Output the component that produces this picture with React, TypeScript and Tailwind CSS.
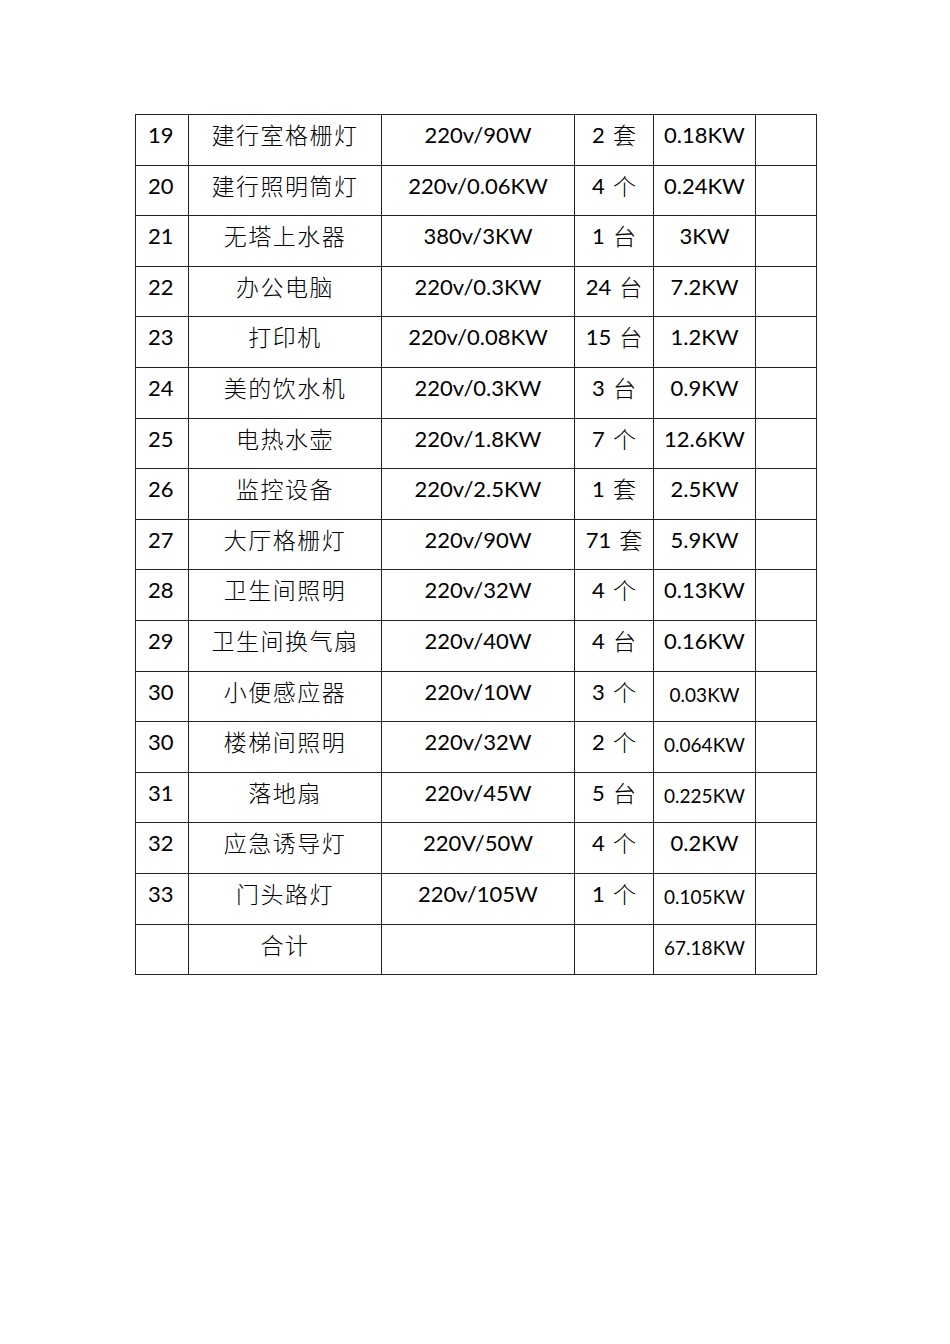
type Row = {
  no: string;
  name: string;
  spec: string;
  qty: string;
  power: string;
  small?: boolean;
};

const rows: Row[] = [
  { no: '19', name: '建行室格栅灯', spec: '220v/90W', qty: '2 套', power: '0.18KW' },
  { no: '20', name: '建行照明筒灯', spec: '220v/0.06KW', qty: '4 个', power: '0.24KW' },
  { no: '21', name: '无塔上水器', spec: '380v/3KW', qty: '1 台', power: '3KW' },
  { no: '22', name: '办公电脑', spec: '220v/0.3KW', qty: '24 台', power: '7.2KW' },
  { no: '23', name: '打印机', spec: '220v/0.08KW', qty: '15 台', power: '1.2KW' },
  { no: '24', name: '美的饮水机', spec: '220v/0.3KW', qty: '3 台', power: '0.9KW' },
  { no: '25', name: '电热水壶', spec: '220v/1.8KW', qty: '7 个', power: '12.6KW' },
  { no: '26', name: '监控设备', spec: '220v/2.5KW', qty: '1 套', power: '2.5KW' },
  { no: '27', name: '大厅格栅灯', spec: '220v/90W', qty: '71 套', power: '5.9KW' },
  { no: '28', name: '卫生间照明', spec: '220v/32W', qty: '4 个', power: '0.13KW' },
  { no: '29', name: '卫生间换气扇', spec: '220v/40W', qty: '4 台', power: '0.16KW' },
  { no: '30', name: '小便感应器', spec: '220v/10W', qty: '3 个', power: '0.03KW', small: true },
  { no: '30', name: '楼梯间照明', spec: '220v/32W', qty: '2 个', power: '0.064KW', small: true },
  { no: '31', name: '落地扇', spec: '220v/45W', qty: '5 台', power: '0.225KW', small: true },
  { no: '32', name: '应急诱导灯', spec: '220V/50W', qty: '4 个', power: '0.2KW' },
  { no: '33', name: '门头路灯', spec: '220v/105W', qty: '1 个', power: '0.105KW', small: true },
  { no: '', name: '合计', spec: '', qty: '', power: '67.18KW', small: true },
];

const cell = 'border border-[#222] align-top pt-[6px] leading-[28px]';

export default function App() {
  return (
    <div
      className="min-h-[1344px] w-[950px] bg-white pt-[114px] pl-[135px] text-[22px] text-black"
      style={{ fontFamily: 'Lato, "Noto Sans CJK SC", sans-serif' }}
    >
      <table className="w-[681px] border-collapse table-fixed">
        <colgroup>
          <col className="w-[53px]" />
          <col className="w-[193px]" />
          <col className="w-[193px]" />
          <col className="w-[79px]" />
          <col className="w-[102px]" />
          <col className="w-[61px]" />
        </colgroup>
        <tbody>
          {rows.map((r, i) => {
            const [n, unit] = r.qty.split(' ');
            return (
              <tr key={i} className="h-[50.6px]">
                <td className={`${cell} pl-[12px] text-left`}>{r.no}</td>
                <td className={`${cell} text-center text-[23px] font-light tracking-[1.5px]`}>{r.name}</td>
                <td className={`${cell} text-center`}>{r.spec}</td>
                <td className={`${cell} text-center`}>
                  {r.qty && (
                    <span className="inline-flex gap-[8px]">
                      <span>{n}</span>
                      <span className="text-[23px] font-light">{unit}</span>
                    </span>
                  )}
                </td>
                <td className={`${cell} text-center`}>
                  {r.small ? (
                    <span className="inline-block pt-[3px] text-[19px]">{r.power}</span>
                  ) : (
                    r.power
                  )}
                </td>
                <td className={cell}></td>
              </tr>
            );
          })}
        </tbody>
      </table>
    </div>
  );
}
